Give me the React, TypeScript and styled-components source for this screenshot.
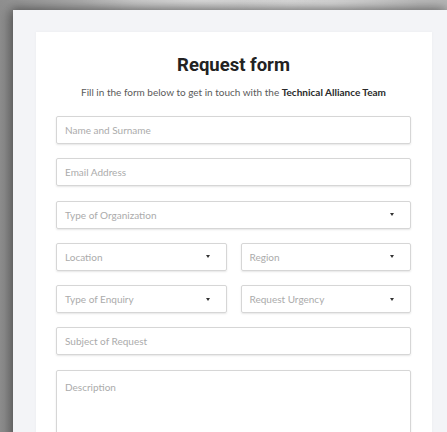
import React from "react";
import styled, { createGlobalStyle } from "styled-components";

const GlobalStyle = createGlobalStyle`
  html, body {
    margin: 0;
    padding: 0;
  }
  body {
    background: linear-gradient(90deg, #8f8f8f 0%, #bdbdbd 30%, #cdcdcd 65%, #b5b5b5 100%);
    font-family: Lato, "Noto Sans", sans-serif;
  }
`;

const Page = styled.div`
  height: 432px;
  overflow: hidden;
  padding: 10px 0 0 13px;
  box-sizing: border-box;
  background:
    radial-gradient(ellipse 120px 14px at 200px 0px, rgba(255, 255, 255, 0.35), transparent),
    radial-gradient(ellipse 90px 12px at 330px 4px, rgba(255, 255, 255, 0.3), transparent);
`;

const Panel = styled.div`
  height: 100%;
  background: #f3f4f7;
  padding: 22px 15px 0 23px;
  box-shadow: -4px 0 12px rgba(0, 0, 0, 0.35), 0 -2px 8px rgba(0, 0, 0, 0.2);
`;

const Card = styled.div`
  height: 100%;
  background: #ffffff;
  padding: 21px 21px 0 20px;
  box-sizing: border-box;
  box-shadow: 0 0 3px rgba(0, 0, 0, 0.04);
`;

const Title = styled.h2`
  margin: 0;
  text-align: center;
  font-family: Roboto, "Liberation Sans", sans-serif;
  font-weight: 700;
  font-size: 18.5px;
  line-height: 24px;
  color: #222;
`;

const Subtitle = styled.p`
  margin: 9px 0 18px;
  text-align: center;
  font-size: 10px;
  line-height: 12px;
  color: #5a5a5a;

  b {
    color: #2a2a2a;
    font-weight: 700;
  }
`;

const Fields = styled.div`
  display: flex;
  flex-direction: column;
  gap: 14.3px;
`;

const Row = styled.div`
  display: grid;
  grid-template-columns: 1fr 1fr;
  gap: 14px;
`;

const Field = styled.div<{ $tall?: boolean }>`
  height: ${(p) => (p.$tall ? "80px" : "28px")};
  border: 1px solid #d6d6d6;
  border-radius: 2px;
  box-shadow: 0 1px 2px rgba(0, 0, 0, 0.1);
  box-sizing: border-box;
  display: flex;
  align-items: ${(p) => (p.$tall ? "flex-start" : "center")};
  justify-content: space-between;
  padding: ${(p) => (p.$tall ? "10px 16px 0 8px" : "0 16px 0 8px")};
  font-size: 10px;
  color: #ababab;
`;

const Caret = styled.span`
  width: 0;
  height: 0;
  border-left: 2.5px solid transparent;
  border-right: 2.5px solid transparent;
  border-top: 3px solid #333;
`;

const Input = ({ label, select }: { label: string; select?: boolean }) => (
  <Field>
    <span>{label}</span>
    {select && <Caret />}
  </Field>
);

export default function App() {
  return (
    <>
      <GlobalStyle />
      <Page>
        <Panel>
          <Card>
            <Title>Request form</Title>
            <Subtitle>
              Fill in the form below to get in touch with the <b>Technical Alliance Team</b>
            </Subtitle>
            <Fields>
              <Input label="Name and Surname" />
              <Input label="Email Address" />
              <Input label="Type of Organization" select />
              <Row>
                <Input label="Location" select />
                <Input label="Region" select />
              </Row>
              <Row>
                <Input label="Type of Enquiry" select />
                <Input label="Request Urgency" select />
              </Row>
              <Input label="Subject of Request" />
              <Field $tall>
                <span>Description</span>
              </Field>
            </Fields>
          </Card>
        </Panel>
      </Page>
    </>
  );
}
